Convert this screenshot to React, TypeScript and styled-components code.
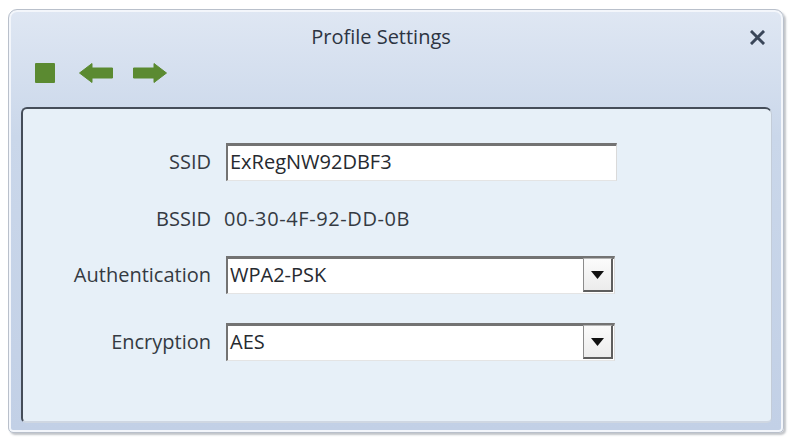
import React from "react";
import styled, { createGlobalStyle } from "styled-components";

const Global = createGlobalStyle`
  html, body { margin: 0; padding: 0; background: #ffffff; }
  body { font-family: "Open Sans", "DejaVu Sans", sans-serif; }
  * { box-sizing: border-box; }
`;

const Page = styled.div`
  width: 792px;
  height: 437px;
  padding: 9px 8px 4px 8px;
  background: #ffffff;
`;

const Window = styled.div`
  width: 776px;
  height: 424px;
  display: flex;
  flex-direction: column;
  border: 1px solid #b9c0cb;
  border-radius: 9px 9px 5px 5px;
  box-shadow: inset 0 0 0 2px #f3f6fb, 2px 2px 2px rgba(120, 126, 138, 0.45);
  background: linear-gradient(180deg, #dfe7f3 0%, #cad7ea 30%, #c2d0e6 100%);
  padding: 0 11px 9px 12px;
`;

const Header = styled.div`
  display: flex;
  flex-direction: column;
  padding: 12px 0 24px 0;
`;

const TitleRow = styled.div`
  display: flex;
  align-items: center;
  height: 30px;
`;

const Title = styled.div`
  flex: 1;
  text-align: center;
  font-size: 20px;
  color: #2c3442;
  line-height: 30px;
  padding-right: 8px;
`;

const CloseBox = styled.div`
  width: 16px;
  height: 16px;
  display: flex;
  align-items: center;
  justify-content: center;
  margin-right: 7px;
`;

const Toolbar = styled.div`
  display: flex;
  align-items: center;
  height: 20px;
  margin-top: 11px;
  padding-left: 14px;
`;

const ToolIcon = styled.div<{ $gap: number }>`
  display: flex;
  margin-right: ${(p) => p.$gap}px;
`;

const Panel = styled.div`
  flex: 1;
  background: #e7f0f8;
  border-top: 2px solid #454d59;
  border-left: 2px solid #454d59;
  border-right: 1px solid #c3ccd8;
  border-bottom: 2px solid #cfd7e2;
  border-radius: 6px 7px 5px 5px;
  display: flex;
  flex-direction: column;
`;

const Row = styled.div<{ $top: number }>`
  display: grid;
  grid-template-columns: 188px 1fr;
  column-gap: 13px;
  align-items: center;
  height: 38px;
  margin-top: ${(p) => p.$top}px;
`;

const Label = styled.div`
  text-align: right;
  font-size: 20px;
  color: #343a42;
  line-height: 24px;
`;

const Value = styled.div`
  font-size: 20px;
  letter-spacing: 0.6px;
  color: #343a42;
  line-height: 24px;
`;

const Field = styled.div<{ $w: number }>`
  width: ${(p) => p.$w}px;
  height: 38px;
  margin-left: 2px;
  background: #ffffff;
  border-top: 3px solid #737373;
  border-left: 2px solid #737373;
  border-right: 1px solid #dadada;
  border-bottom: 1px solid #e4e4e4;
  display: flex;
  align-items: center;
  justify-content: space-between;
  padding-left: 2px;
  padding-right: 1px;
`;

const FieldText = styled.span`
  font-size: 20px;
  color: #262a30;
  line-height: 24px;
  margin-top: -2px;
`;

const DropButton = styled.div`
  width: 30px;
  height: 34px;
  margin-top: -2px;
  background: linear-gradient(180deg, #fbfbfb 0%, #ececec 100%);
  border-top: 1px solid #b4b4b4;
  border-left: 1px solid #8c8c8c;
  border-right: 2px solid #5e5e5e;
  border-bottom: 2px solid #5e5e5e;
  display: flex;
  align-items: center;
  justify-content: center;
`;

const Square = () => (
  <svg width="20" height="20" viewBox="0 0 20 20">
    <rect x="0" y="0" width="20" height="20" rx="1" fill="#5b8a31" />
  </svg>
);

const LeftArrow = () => (
  <svg width="34" height="20" viewBox="0 0 34 20">
    <polygon points="0.5,10 13,0.5 13,5 33.5,5 33.5,15 13,15 13,19.5" fill="#5b8a31" strokeLinejoin="round" stroke="#5b8a31" strokeWidth="1" />
  </svg>
);

const RightArrow = () => (
  <svg width="34" height="20" viewBox="0 0 34 20">
    <polygon points="33.5,10 21,0.5 21,5 0.5,5 0.5,15 21,15 21,19.5" fill="#5b8a31" strokeLinejoin="round" stroke="#5b8a31" strokeWidth="1" />
  </svg>
);

const CloseIcon = () => (
  <svg width="15" height="15" viewBox="0 0 15 15">
    <path d="M2 2 L13 13 M13 2 L2 13" stroke="#3a4659" strokeWidth="3" strokeLinecap="square" />
  </svg>
);

const Triangle = () => (
  <svg width="13" height="8" viewBox="0 0 13 8">
    <polygon points="0,0 13,0 6.5,8" fill="#111111" />
  </svg>
);

export default function App() {
  return (
    <Page>
      <Global />
      <Window>
        <Header>
          <TitleRow>
            <Title>Profile Settings</Title>
            <CloseBox>
              <CloseIcon />
            </CloseBox>
          </TitleRow>
          <Toolbar>
            <ToolIcon $gap={24}>
              <Square />
            </ToolIcon>
            <ToolIcon $gap={20}>
              <LeftArrow />
            </ToolIcon>
            <ToolIcon $gap={0}>
              <RightArrow />
            </ToolIcon>
          </Toolbar>
        </Header>
        <Panel>
          <Row $top={34}>
            <Label>SSID</Label>
            <Field $w={391}>
              <FieldText>ExRegNW92DBF3</FieldText>
            </Field>
          </Row>
          <Row $top={19}>
            <Label>BSSID</Label>
            <Value>00-30-4F-92-DD-0B</Value>
          </Row>
          <Row $top={18}>
            <Label>Authentication</Label>
            <Field $w={389}>
              <FieldText>WPA2-PSK</FieldText>
              <DropButton>
                <Triangle />
              </DropButton>
            </Field>
          </Row>
          <Row $top={29}>
            <Label>Encryption</Label>
            <Field $w={389}>
              <FieldText>AES</FieldText>
              <DropButton>
                <Triangle />
              </DropButton>
            </Field>
          </Row>
        </Panel>
      </Window>
    </Page>
  );
}
